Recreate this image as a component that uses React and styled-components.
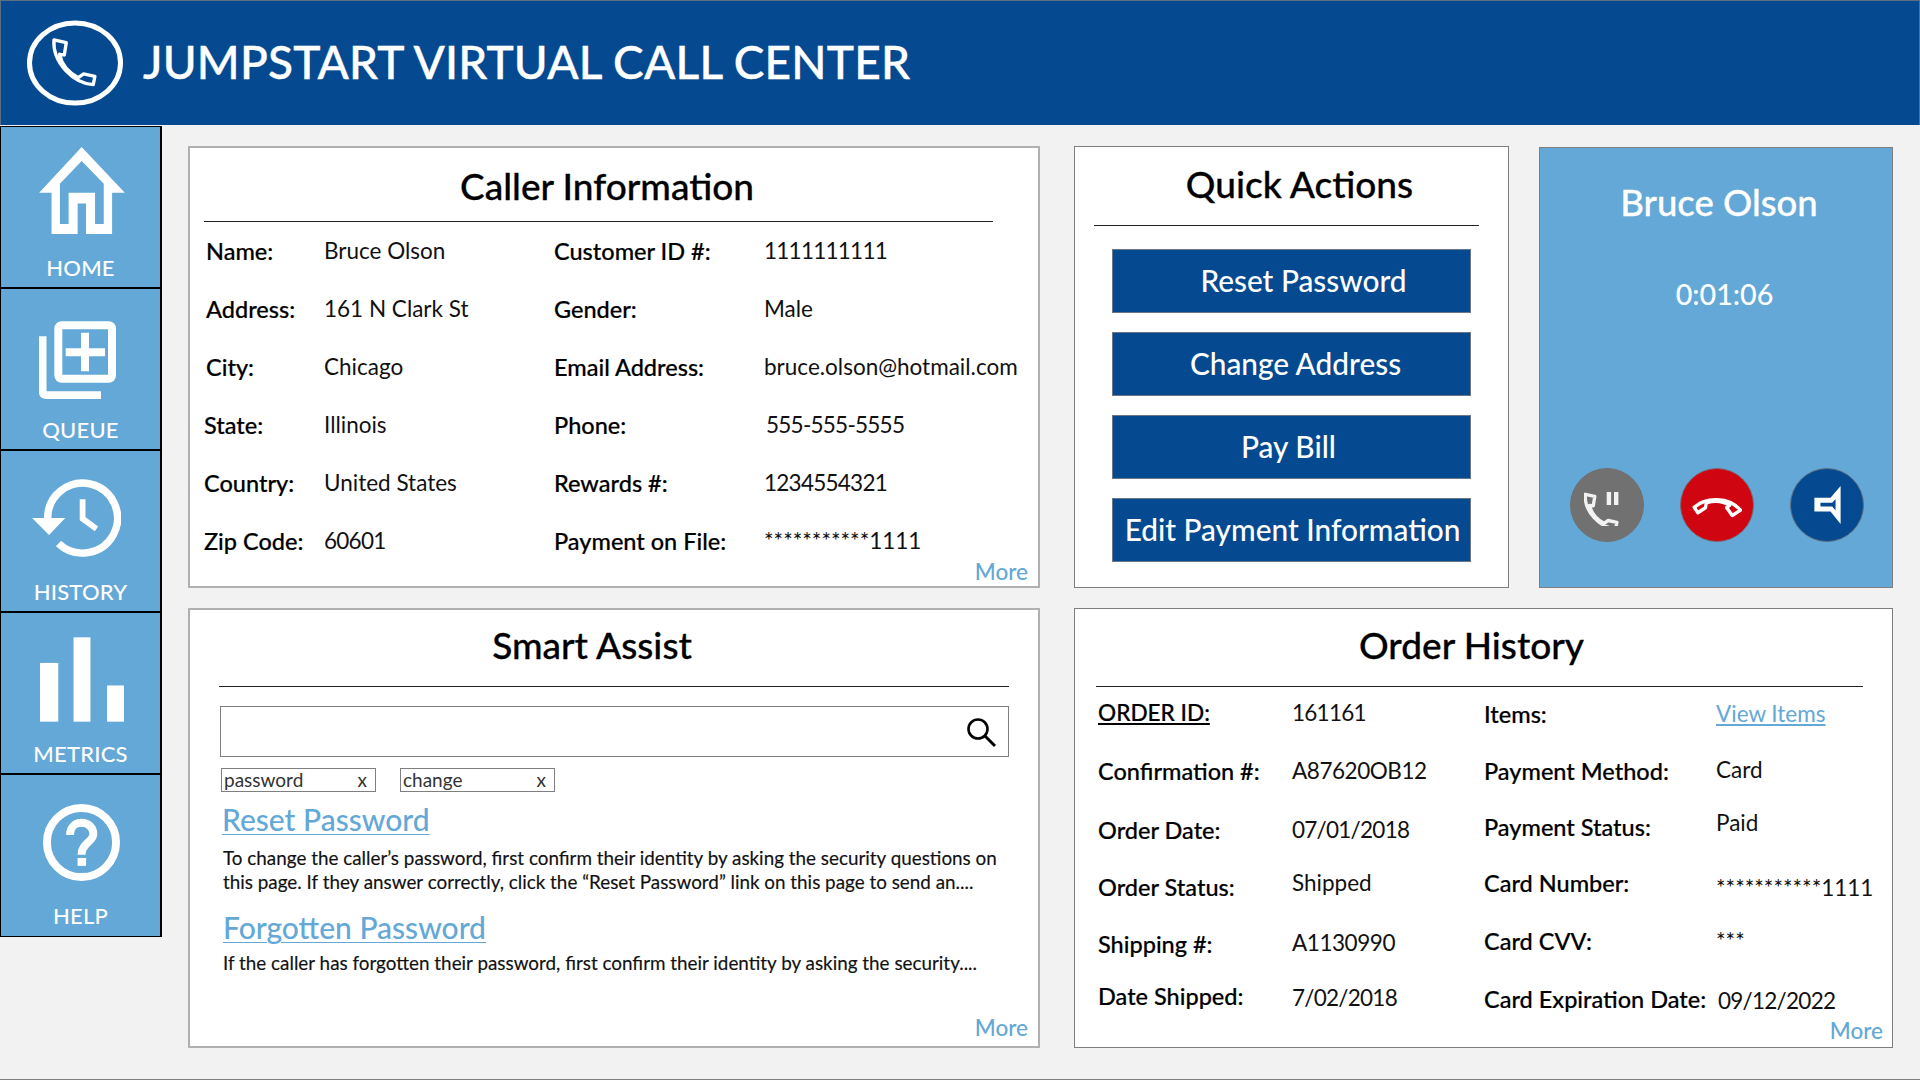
import React from 'react';
import styled, { createGlobalStyle } from 'styled-components';

const navy = '#054a91';
const sky = '#63a8d6';

const GlobalStyle = createGlobalStyle`
  html, body { margin: 0; padding: 0; background: #f2f2f2; }
  body { font-family: Lato, "Open Sans", sans-serif; color: #000; }
`;

const Page = styled.div`
  width: 1920px;
  height: 1080px;
  overflow: hidden;
  background: #f2f2f2;
  border-bottom: 1px solid #7f7f7f;
  box-sizing: border-box;
`;

const Header = styled.header`
  height: 125px;
  background: ${navy};
  display: flex;
  align-items: center;
  padding-left: 26px;
  box-sizing: border-box;
  border: 1px solid #5a6f86;
  border-bottom: 0;
`;

const HeaderTitle = styled.h1`
  margin: 0 0 3px 20px;
  font-size: 46px;
  font-weight: 500;
  color: #fff;
  letter-spacing: 0.2px;
  -webkit-text-stroke: 0.4px #fff;
`;

const Body = styled.div`
  display: flex;
  align-items: flex-start;
`;

const Sidebar = styled.nav`
  width: 162px;
  margin-top: 1px;
  flex: none;
  border: 1px solid #000;
  border-width: 1px 2px 1px 1px;
  box-sizing: border-box;
`;

const NavItem = styled.a`
  display: flex;
  flex-direction: column;
  align-items: center;
  height: 162px;
  box-sizing: border-box;
  background: ${sky};
  color: #fff;
  font-size: 22px;
  font-weight: 500;
  letter-spacing: 0.2px;
  border-bottom: 2px solid #000;
  &:last-child { border-bottom: 0; height: 161px; }
`;

const NavIcon = styled.div`
  height: 127px;
  padding: ${p => p.$drop || 0}px ${p => p.$back || 0}px ${p => p.$lift || 0}px 2px;
  box-sizing: border-box;
  display: flex;
  align-items: center;
  justify-content: center;
  width: 100%;
`;

const Content = styled.main`
  flex: 1;
  display: flex;
  flex-direction: column;
  gap: 20px;
  padding: 21px 26px 0 26px;
`;

const Row = styled.div`
  display: flex;
  gap: 34px;
  height: ${p => p.$height}px;
`;

const Panel = styled.section`
  width: ${p => p.$width}px;
  flex: none;
  box-sizing: border-box;
  background: #fff;
  border: ${p => (p.$soft ? '2px solid #b0b0b0' : '1px solid #7f7f7f')};
  display: flex;
  flex-direction: column;
`;

const PanelTitle = styled.h2`
  margin: 0;
  flex: none;
  font-size: 37px;
  line-height: 44px;
  font-weight: 500;
  text-align: center;
  height: ${p => p.$h}px;
  padding: ${p => p.$top}px ${p => p.$right || 0}px 0 ${p => p.$left || 0}px;
  box-sizing: border-box;
  -webkit-text-stroke: 0.3px #000;
`;

const Rule = styled.hr`
  margin: 0 ${p => p.$mr || 0}px 0 ${p => p.$ml || 0}px;
  border: 0;
  border-top: 1px solid #222;
  flex: none;
`;

const InfoGrid = styled.div`
  display: grid;
  grid-template-columns: ${p => p.$cols};
  grid-auto-rows: 26px;
  row-gap: ${p => p.$gap}px;
  margin-top: ${p => p.$top}px;
  flex: none;
`;

const Label = styled.div`
  font-size: 23.5px;
  line-height: 26px;
  font-weight: 500;
  white-space: nowrap;
  -webkit-text-stroke: 0.2px #000;
  margin: ${p => p.$y || 0}px 0 0 ${p => p.$x || 0}px;
`;

const Value = styled.div`
  font-size: 22.5px;
  line-height: 26px;
  white-space: nowrap;
  color: #111;
  letter-spacing: ${p => p.$spacing || 0}px;
  margin: ${p => p.$y || 0}px 0 0 ${p => p.$x || 0}px;
`;

const UnderLabel = styled(Label)`
  font-size: 22.6px;
  text-decoration: underline;
`;

const TextLink = styled.a`
  display: block;
  width: fit-content;
  height: 26px;
  font-size: 22.5px;
  line-height: 26px;
  color: ${sky};
  text-decoration: underline;
  white-space: nowrap;
  margin-top: ${p => p.$y || 0}px;
`;

const More = styled.a`
  margin-top: auto;
  align-self: flex-end;
  font-size: 22.5px;
  line-height: 26px;
  font-weight: 500;
  color: ${sky};
  margin-right: ${p => p.$r}px;
  margin-bottom: ${p => p.$b}px;
`;

const ActionList = styled.div`
  display: flex;
  flex-direction: column;
  gap: 19px;
  margin: 23px 37px 0 37px;
`;

const ActionButton = styled.button`
  height: 64px;
  background: ${navy};
  border: 1px solid #6b7785;
  color: #fff;
  font-family: inherit;
  font-size: 29.8px;
  font-weight: 500;
  padding: 0 ${p => p.$pr || 0}px 2px ${p => p.$pl || 0}px;
  white-space: nowrap;
`;

const CallPanel = styled.section`
  width: 354px;
  flex: none;
  box-sizing: border-box;
  margin: 1px 0 0 -4px;
  background: ${sky};
  border: 1px solid #7f7f7f;
  color: #fff;
  display: flex;
  flex-direction: column;
  align-items: center;
`;

const CallerName = styled.div`
  font-size: 36.5px;
  font-weight: 500;
  line-height: 42px;
  margin-top: 33px;
  padding-left: 6px;
  -webkit-text-stroke: 0.3px #fff;
`;

const Timer = styled.div`
  font-size: 28.7px;
  line-height: 34px;
  font-weight: 500;
  margin-top: 54px;
  padding-left: 17px;
`;

const CallControls = styled.div`
  display: flex;
  gap: 36px;
  margin-top: 157px;
  padding-left: 2px;
`;

const RoundButton = styled.button`
  width: 74px;
  height: 74px;
  border-radius: 50%;
  padding: 0;
  background: ${p => p.$bg};
  border: 1px solid ${p => p.$line};
  display: flex;
  align-items: center;
  justify-content: center;
`;

const SearchBox = styled.div`
  height: 51px;
  margin: 19px 29px 0 30px;
  box-sizing: border-box;
  border: 1px solid #7f7f7f;
  display: flex;
  align-items: center;
  justify-content: flex-end;
  padding-right: 11px;
  flex: none;
`;

const TagRow = styled.div`
  display: flex;
  gap: 24px;
  margin: 11px 0 0 31px;
  flex: none;
`;

const Tag = styled.div`
  width: 155px;
  height: 24px;
  box-sizing: border-box;
  border: 1px solid #7f7f7f;
  font-size: 19px;
  line-height: 21px;
  color: #333;
  padding: 0 8px 0 2px;
  display: flex;
  justify-content: space-between;
`;

const ArticleTitle = styled.a`
  display: block;
  width: fit-content;
  flex: none;
  font-size: 30px;
  line-height: 34px;
  font-weight: 500;
  color: ${sky};
  text-decoration: underline;
  text-decoration-thickness: 1px;
  text-underline-offset: 3px;
  margin: ${p => p.$top}px 0 0 ${p => p.$left}px;
`;

const ArticleText = styled.p`
  margin: ${p => p.$top}px 0 0 33px;
  flex: none;
  font-size: 18.85px;
  line-height: 24px;
  white-space: nowrap;
  color: #111;
  -webkit-text-stroke: 0.15px #111;
`;

const Handset = ({ stroke = '#fff', width = 10 }) => (
  <path
    d="M135 105 L172 113 L166 150 L152 148 C158 180 180 203 208 218 L224 207 L258 214 L253 239 C195 235 130 175 135 105 Z"
    fill="none"
    stroke={stroke}
    strokeWidth={width}
    strokeLinejoin="round"
  />
);

const Logo = () => (
  <svg width="96" height="86" viewBox="0 0 96 86">
    <ellipse cx="48" cy="43" rx="45.5" ry="40" fill="none" stroke="#fff" strokeWidth="5" />
    <g transform="translate(-18 -15) scale(0.333)">
      <Handset />
    </g>
  </svg>
);

const HomeIcon = () => (
  <svg width="86" height="87" viewBox="120 78 256 260">
    <path
      fillRule="evenodd"
      fill="#fff"
      d="M247 78 L376 215 H338 V338 H260 V247 H235 V338 H157 V215 H120 Z M247 120 L182 188 V308 H208 V215 H287 V308 H313 V188 Z"
    />
  </svg>
);

const QueueIcon = () => (
  <svg width="77" height="78" viewBox="117 65 231 233">
    <rect x="175" y="77" width="161" height="161" rx="10" fill="none" stroke="#fff" strokeWidth="24" />
    <path d="M197 146 H243 V100 H267 V146 H315 V170 H267 V215 H243 V170 H197 Z" fill="#fff" />
    <path d="M128 110 V276 Q128 287 139 287 H303" fill="none" stroke="#fff" strokeWidth="23" />
  </svg>
);

const HistoryIcon = () => (
  <svg width="89" height="78" viewBox="97 545 262 230">
    <path d="M143 662 A103 103 0 1 1 175 735" fill="none" stroke="#fff" strokeWidth="22" />
    <path d="M97 660 H195 L147 710 Z" fill="#fff" />
    <path d="M246 605 V662 L287 692" fill="none" stroke="#fff" strokeWidth="17" />
  </svg>
);

const MetricsIcon = () => (
  <svg width="84" height="85" viewBox="120 113 253 254">
    <rect x="120" y="190" width="55" height="177" fill="#fff" />
    <rect x="221" y="113" width="51" height="254" fill="#fff" />
    <rect x="322" y="258" width="51" height="109" fill="#fff" />
  </svg>
);

const HelpIcon = () => (
  <svg width="77" height="77" viewBox="131 603 234 234">
    <circle cx="248" cy="720" r="105" fill="none" stroke="#fff" strokeWidth="24" />
    <path d="M213 697 C213 672 230 660 248 660 C270 660 284 676 284 694 C284 718 248 722 248 757" fill="none" stroke="#fff" strokeWidth="24" />
    <rect x="236" y="767" width="26" height="24" fill="#fff" />
  </svg>
);

const HoldIcon = () => (
  <svg width="46" height="42" viewBox="0 0 46 42">
    <g transform="translate(-33.4 -16.7) scale(0.257)">
      <Handset stroke="#f2f2f2" width="13" />
    </g>
    <rect x="22.7" y="8" width="4.4" height="13" fill="#f2f2f2" />
    <rect x="30" y="8" width="4.4" height="13" fill="#f2f2f2" />
  </svg>
);

const HangUpIcon = () => (
  <svg width="50" height="26" viewBox="0 0 50 26">
    <g transform="translate(25 13) rotate(135) scale(0.26) translate(-185 -183)">
      <Handset width="13" />
    </g>
  </svg>
);

const SpeakerIcon = () => (
  <svg width="27" height="38" viewBox="842 137 78 113">
    <path
      fillRule="evenodd"
      fill="#fff"
      d="M842 172 H890 L920 137 V250 L890 213 H842 Z M860 187 V198 H895 L905 210 V176 L895 187 Z"
    />
  </svg>
);

const SearchIcon = () => (
  <svg width="32" height="32" viewBox="0 0 32 32">
    <circle cx="13" cy="13" r="9.5" fill="none" stroke="#000" strokeWidth="2.6" />
    <path d="M20 20 L30 30" stroke="#000" strokeWidth="3" />
  </svg>
);

const navItems = [
  { label: 'HOME', icon: <HomeIcon />, lift: 1 },
  { label: 'QUEUE', icon: <QueueIcon />, drop: 14, back: 8 },
  { label: 'HISTORY', icon: <HistoryIcon />, drop: 7, back: 10 },
  { label: 'METRICS', icon: <MetricsIcon />, drop: 6 },
  { label: 'HELP', icon: <HelpIcon />, drop: 7 },
];

const callerRows = [
  ['Name:', 'Bruce Olson', 'Customer ID #:', '1111111111'],
  ['Address:', '161 N Clark St', 'Gender:', 'Male'],
  ['City:', 'Chicago', 'Email Address:', 'bruce.olson@hotmail.com'],
  ['State:', 'Illinois', 'Phone:', '555-555-5555'],
  ['Country:', 'United States', 'Rewards #:', '1234554321'],
  ['Zip Code:', '60601', 'Payment on File:', '***********1111'],
];

// y nudges per cell: the source layout is not quite on a grid
const orderRows = [
  [['ORDER ID:', 0], ['161161', 0], ['Items:', 1], ['View Items', 1]],
  [['Confirmation #:', 0], ['A87620OB12', 0], ['Payment Method:', 0], ['Card', -1]],
  [['Order Date:', 2], ['07/01/2018', 2], ['Payment Status:', -1], ['Paid', -5]],
  [['Order Status:', 1.5], ['Shipped', -2.5], ['Card Number:', -2.5], ['***********1111', 2.5]],
  [['Shipping #:', 1], ['A1130990', 0], ['Card CVV:', -2], ['***', -2]],
  [['Date Shipped:', -4.5], ['7/02/2018', -2.5], ['Card Expiration Date:', -1.5], ['09/12/2022', 0.5]],
];

// digits run narrower in the source than in Lato
const spacingFor = text => {
  if (/^[\d/-]+$/.test(text)) return -0.75;
  if (/^A\d/.test(text)) return -0.45;
  return 0;
};

const App = () => (
  <Page>
    <GlobalStyle />
    <Header>
      <Logo />
      <HeaderTitle>JUMPSTART VIRTUAL CALL CENTER</HeaderTitle>
    </Header>
    <Body>
      <Sidebar>
        {navItems.map(item => (
          <NavItem key={item.label}>
            <NavIcon $lift={item.lift} $drop={item.drop} $back={item.back}>{item.icon}</NavIcon>
            {item.label}
          </NavItem>
        ))}
      </Sidebar>
      <Content>
        <Row $height={442}>
          <Panel $width={852} $soft>
            <PanelTitle $h={73} $top={16} $right={14}>Caller Information</PanelTitle>
            <Rule $ml={14} $mr={45} />
            <InfoGrid $cols="134px 230px 210px 1fr" $gap={32} $top={16}>
              {callerRows.map((row, r) =>
                row.map((text, i) =>
                  i % 2 === 0 ? (
                    <Label key={text} $x={i === 0 ? (r < 3 ? 16 : 14) : 0}>{text}</Label>
                  ) : (
                    <Value key={text} $spacing={spacingFor(text)} $x={text.startsWith('555') ? 2 : 0}>{text}</Value>
                  )
                )
              )}
            </InfoGrid>
            <More $r={10} $b={1}>More</More>
          </Panel>
          <Panel $width={435}>
            <PanelTitle $h={78} $top={15} $left={16}>Quick Actions</PanelTitle>
            <Rule $ml={19} $mr={29} />
            <ActionList>
              <ActionButton $pl={24}>Reset Password</ActionButton>
              <ActionButton $pl={8}>Change Address</ActionButton>
              <ActionButton $pr={6}>Pay Bill</ActionButton>
              <ActionButton $pl={2}>Edit Payment Information</ActionButton>
            </ActionList>
          </Panel>
          <CallPanel>
            <CallerName>Bruce Olson</CallerName>
            <Timer>0:01:06</Timer>
            <CallControls>
              <RoundButton $bg="#717171" $line="#717171"><HoldIcon /></RoundButton>
              <RoundButton $bg="#cf0612" $line="#7a6a70"><HangUpIcon /></RoundButton>
              <RoundButton $bg={navy} $line="#5f6f80"><SpeakerIcon /></RoundButton>
            </CallControls>
          </CallPanel>
        </Row>
        <Row $height={440}>
          <Panel $width={852} $soft>
            <PanelTitle $h={76} $top={13} $right={44}>Smart Assist</PanelTitle>
            <Rule $ml={29} $mr={29} />
            <SearchBox><SearchIcon /></SearchBox>
            <TagRow>
              <Tag>password<span>x</span></Tag>
              <Tag>change<span>x</span></Tag>
            </TagRow>
            <ArticleTitle $top={10} $left={32}>Reset Password</ArticleTitle>
            <ArticleText $top={10}>
              To change the caller’s password, first confirm their identity by asking the security questions on
              <br />
              this page. If they answer correctly, click the “Reset Password” link on this page to send an....
            </ArticleText>
            <ArticleTitle $top={16} $left={33}>Forgotten Password</ArticleTitle>
            <ArticleText $top={7}>
              If the caller has forgotten their password, first confirm their identity by asking the security....
            </ArticleText>
            <More $r={10} $b={5}>More</More>
          </Panel>
          <Panel $width={819}>
            <PanelTitle $h={77} $top={14} $right={24}>Order History</PanelTitle>
            <Rule $ml={21} $mr={29} />
            <InfoGrid $cols="217px 192px 232px 1fr" $gap={31.5} $top={13}>
              {orderRows.map(row =>
                row.map(([text, nudge], i) => {
                  if (text === 'ORDER ID:') return <UnderLabel key={text} $x={23}>{text}</UnderLabel>;
                  if (text === 'View Items') return <TextLink key={text} $y={nudge}>{text}</TextLink>;
                  if (i === 0) return <Label key={text} $x={23} $y={nudge}>{text}</Label>;
                  if (i === 2) return <Label key={text} $y={nudge}>{text}</Label>;
                  return <Value key={text} $y={nudge} $spacing={spacingFor(text)} $x={text === '09/12/2022' ? 2 : 0}>{text}</Value>;
                })
              )}
            </InfoGrid>
            <More $r={9} $b={3}>More</More>
          </Panel>
        </Row>
      </Content>
    </Body>
  </Page>
);

export default App;
